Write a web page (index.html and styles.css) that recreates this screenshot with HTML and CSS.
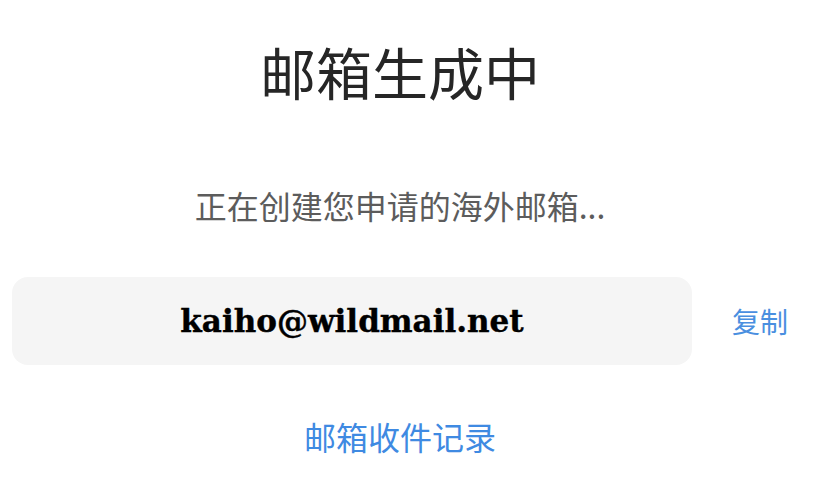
FILE: index.html
```html
<!DOCTYPE html>
<html lang="zh-CN">
<head>
<meta charset="utf-8">
<title>邮箱生成中</title>
<link rel="stylesheet" href="styles.css">
</head>
<body>
<main class="page">
  <h1 class="title">邮箱生成中</h1>
  <p class="subtitle">正在创建您申请的海外邮箱...</p>
  <div class="email-row">
    <div class="email-box">kaiho@wildmail.net</div>
    <a class="copy-link" href="#">复制</a>
  </div>
  <a class="records-link" href="#">邮箱收件记录</a>
</main>
</body>
</html>
```
FILE: styles.css
```css
html, body {
  margin: 0;
  padding: 0;
  background: #ffffff;
}
.page {
  width: 800px;
  display: flex;
  flex-direction: column;
  align-items: center;
  font-family: "Noto Sans CJK SC", "Noto Sans", sans-serif;
}
.title {
  margin: 36px 0 0;
  font-size: 56px;
  line-height: 70px;
  font-weight: 400;
  color: #262626;
}
.subtitle {
  margin: 79px 0 0;
  font-size: 32px;
  line-height: 40px;
  color: #5c5c5c;
}
.email-row {
  align-self: stretch;
  display: flex;
  align-items: center;
  margin-top: 52px;
  padding-left: 12px;
}
.email-box {
  width: 680px;
  height: 88px;
  border-radius: 16px;
  background: #f5f5f5;
  display: flex;
  align-items: center;
  justify-content: center;
  font-family: "DejaVu Serif", "Liberation Serif", serif;
  font-weight: 700;
  font-size: 31px;
  color: #000000;
  -webkit-text-stroke: 0.4px #000000;
}
.copy-link {
  margin-left: 40px;
  font-size: 28px;
  color: #4a8fe0;
  text-decoration: none;
}
.records-link {
  margin-top: 49px;
  font-size: 32px;
  line-height: 44px;
  color: #3f8ae2;
  text-decoration: none;
}
```
